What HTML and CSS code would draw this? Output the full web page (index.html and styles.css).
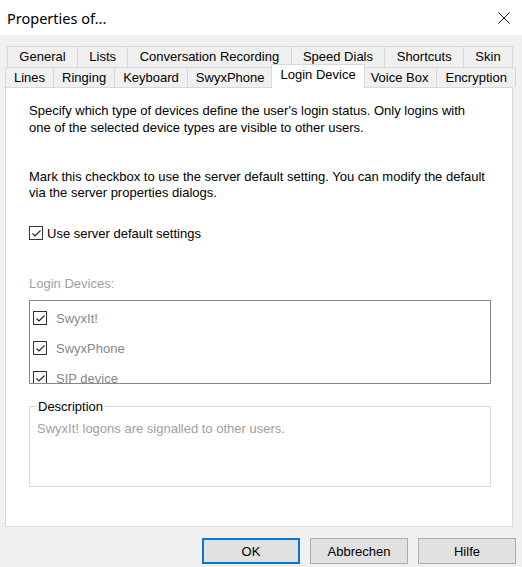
FILE: index.html
```html
<!DOCTYPE html>
<html>
<head>
<meta charset="utf-8">
<title>Properties of...</title>
<link rel="stylesheet" href="styles.css">
</head>
<body>
<header class="titlebar">
  <span class="title">Properties of...</span>
  <svg class="close" width="12" height="12" viewBox="0 0 12 12"><path d="M0.5 0.5 L11.5 11.5 M11.5 0.5 L0.5 11.5" stroke="#1a1a1a" stroke-width="1" fill="none"/></svg>
</header>
<div class="main">
  <div class="tabs">
    <div class="tabrow row-back">
      <div class="tab">General</div>
      <div class="tab">Lists</div>
      <div class="tab">Conversation Recording</div>
      <div class="tab">Speed Dials</div>
      <div class="tab">Shortcuts</div>
      <div class="tab">Skin</div>
    </div>
    <div class="tabrow row-front">
      <div class="tab">Lines</div>
      <div class="tab">Ringing</div>
      <div class="tab">Keyboard</div>
      <div class="tab">SwyxPhone</div>
      <div class="tab active">Login Device</div>
      <div class="tab">Voice Box</div>
      <div class="tab">Encryption</div>
    </div>
  </div>
  <div class="panel">
    <p class="text intro">Specify which type of devices define the user's login status. Only logins with one of the selected device types are visible to other users.</p>
    <p class="text mark">Mark this checkbox to use the server default setting. You can modify the default via the server properties dialogs.</p>
    <label class="check-row">
      <span class="cb"><svg width="11" height="11" viewBox="0 0 11 11"><path d="M1.5 5.5 L4 8 L9.5 2.5" stroke="#222" stroke-width="1.1" fill="none"/></svg></span>
      <span>Use server default settings</span>
    </label>
    <div class="disabled-label">Login Devices:</div>
    <div class="listbox">
      <div class="item"><span class="cb"><svg width="11" height="11" viewBox="0 0 11 11"><path d="M1.5 5.5 L4 8 L9.5 2.5" stroke="#222" stroke-width="1.1" fill="none"/></svg></span><span>SwyxIt!</span></div>
      <div class="item"><span class="cb"><svg width="11" height="11" viewBox="0 0 11 11"><path d="M1.5 5.5 L4 8 L9.5 2.5" stroke="#222" stroke-width="1.1" fill="none"/></svg></span><span>SwyxPhone</span></div>
      <div class="item"><span class="cb"><svg width="11" height="11" viewBox="0 0 11 11"><path d="M1.5 5.5 L4 8 L9.5 2.5" stroke="#222" stroke-width="1.1" fill="none"/></svg></span><span>SIP device</span></div>
    </div>
    <fieldset class="desc">
      <legend>Description</legend>
      <div class="desc-text">SwyxIt! logons are signalled to other users.</div>
    </fieldset>
  </div>
</div>
<div class="buttons">
  <button class="btn default">OK</button>
  <button class="btn">Abbrechen</button>
  <button class="btn">Hilfe</button>
</div>
</body>
</html>
```
FILE: styles.css
```css
html, body {
  margin: 0;
  padding: 0;
}
body {
  width: 522px;
  height: 567px;
  overflow: hidden;
  background: #f0f0f0;
  font-family: "Liberation Sans", Arial, sans-serif;
  font-size: 13px;
  color: #000;
}
.titlebar {
  height: 35px;
  background: #fff;
  display: flex;
  align-items: center;
  justify-content: space-between;
  padding: 0 12px 0 7px;
  box-sizing: border-box;
}
.title {
  font-family: "Noto Sans", "Open Sans", sans-serif;
  font-size: 14.5px;
  color: #000;
}
.close {
  display: block;
  margin-top: 1px;
}
.main {
  padding: 11px 9px 0 5px;
}
.tabrow {
  display: flex;
}
.row-back {
  height: 21px;
  margin-left: 2px;
}
.row-front {
  height: 20px;
}
.tab {
  flex: 1 1 auto;
  border: 1px solid #d9d9d9;
  border-bottom: 0;
  margin-left: -1px;
  text-align: center;
  white-space: nowrap;
  padding: 0 8px;
  background: #f0f0f0;
}
.tab:first-child {
  margin-left: 0;
}
.row-back .tab {
  line-height: 20px;
}
.row-front .tab {
  line-height: 19px;
}
.row-front .tab.active {
  position: relative;
  z-index: 1;
  align-self: flex-start;
  height: 24px;
  margin: -3px -2px 0 -2px;
  line-height: 20px;
  background: #fff;
  box-sizing: border-box;
}
.panel {
  background: #fff;
  border: 1px solid #d9d9d9;
  height: 440px;
  box-sizing: border-box;
  padding: 14px 21px 0 23px;
}
.text {
  margin: 0;
  line-height: 16px;
}
.intro {
  max-width: 455px;
  line-height: 17px;
}
.mark {
  margin-top: 33px;
}
.check-row {
  display: flex;
  align-items: center;
  gap: 4px;
  margin-top: 24px;
  height: 16px;
}
.cb {
  width: 14px;
  height: 14px;
  border: 1px solid #333;
  box-sizing: border-box;
  display: flex;
  align-items: center;
  justify-content: center;
  background: #fff;
  flex: none;
}
.cb svg {
  display: block;
}
.disabled-label {
  margin-top: 35px;
  line-height: 16px;
  color: #a0a0a0;
}
.listbox {
  margin-top: 8px;
  height: 84px;
  border: 1px solid #828790;
  box-sizing: border-box;
  overflow: hidden;
  padding-top: 2px;
}
.item {
  display: flex;
  align-items: center;
  height: 30px;
  padding-left: 3px;
  gap: 9px;
  color: #86888c;
}
.desc {
  margin: 15px 0 0 0;
  padding: 0 7px 49px 7px;
  border: 1px solid #dcdcdc;
}
.desc legend {
  padding: 0 1px;
  line-height: 15px;
  color: #000;
}
.desc-text {
  padding-top: 7px;
  line-height: 16px;
  color: #a0a0a0;
}
.buttons {
  display: flex;
  justify-content: flex-end;
  gap: 10px;
  padding: 11px 6px 0 0;
}
.btn {
  width: 98px;
  height: 26px;
  box-sizing: border-box;
  margin: 0;
  padding: 0;
  background: #e1e1e1;
  border: 1px solid #adadad;
  border-radius: 0;
  font-family: "Liberation Sans", Arial, sans-serif;
  font-size: 13px;
  color: #000;
}
.btn.default {
  border: 2px solid #0078d7;
}
```
